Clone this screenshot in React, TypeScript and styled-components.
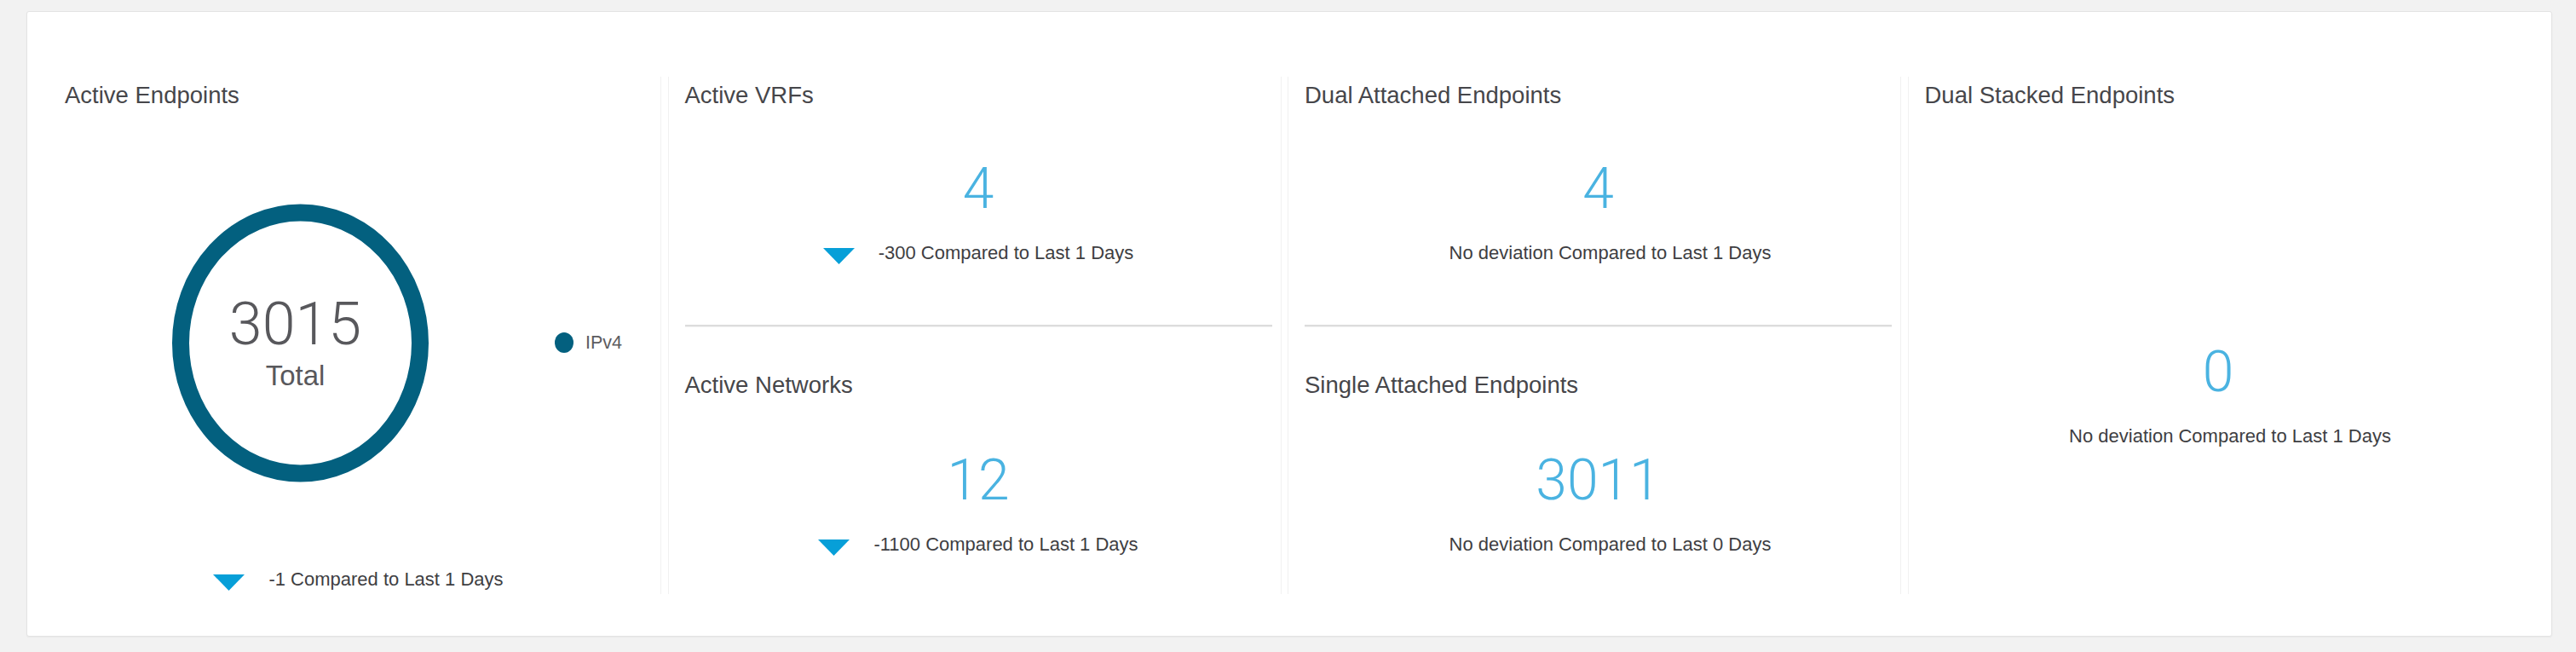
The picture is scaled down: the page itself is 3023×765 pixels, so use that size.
import React from "react";
import styled, { createGlobalStyle } from "styled-components";

const GlobalStyle = createGlobalStyle`
  html, body { margin: 0; padding: 0; background: #f2f2f2; }
  body { font-family: "Liberation Sans", Arial, sans-serif; }
  * { box-sizing: border-box; }
`;

const Page = styled.div`
  padding: 13px 28px 18px 31px;
  background: #f2f2f2;
  min-height: 765px;
`;

const Card = styled.div`
  background: #ffffff;
  border: 1px solid #e3e3e3;
  border-radius: 3px;
  box-shadow: 0 1px 2px rgba(0, 0, 0, 0.04);
  padding: 76px 0 49px 24px;
`;

const Grid = styled.div`
  display: grid;
  grid-template-columns: repeat(4, 720px);
  column-gap: 7.5px;
  height: 607px;
`;

const Column = styled.section`
  display: flex;
  flex-direction: column;
  padding: 0 10px 0 19px;
  border-left: 1px solid #f1f1f1;
  border-right: 1px solid #f1f1f1;
  min-width: 0;

  &:first-child {
    border-left-color: transparent;
  }
  &:last-child {
    border-right-color: transparent;
  }
`;

const Section = styled.div<{ $top: number; $bottom?: number }>`
  display: flex;
  flex-direction: column;
  padding-top: ${(p) => p.$top}px;
  padding-bottom: ${(p) => p.$bottom ?? 0}px;
`;

const Title = styled.h3`
  margin: 0;
  font-size: 27.5px;
  line-height: 32px;
  font-weight: 400;
  color: #46464a;
  white-space: nowrap;
`;

const Value = styled.div<{ $gap: number }>`
  margin-top: ${(p) => p.$gap}px;
  font-family: Roboto, "Liberation Sans", sans-serif;
  font-weight: 300;
  font-size: 66px;
  line-height: 66px;
  color: #4ab3e1;
  text-align: center;
`;

const Delta = styled.div<{ $gap: number }>`
  margin-top: ${(p) => p.$gap}px;
  display: flex;
  justify-content: center;
  align-items: flex-start;
  gap: 28px;
  font-size: 22px;
  line-height: 26px;
  color: #3e3e42;
  white-space: nowrap;
`;

const DownIcon = styled.svg`
  flex: none;
  margin-top: 7px;
  display: block;
`;

const IconSlot = styled.span`
  width: 0;
  flex: none;
`;

const Divider = styled.div`
  height: 2px;
  background: #dcdcdc;
  box-shadow: 0 1px 0 #f1f1f1;
`;

const ChartRow = styled.div`
  margin-top: 110.6px;
  margin-left: 126px;
  display: flex;
  align-items: center;
`;

const RingBox = styled.div`
  position: relative;
  width: 301px;
  height: 327px;
  flex: none;
`;

const RingLabel = styled.div`
  position: absolute;
  inset: 0;
  display: flex;
  flex-direction: column;
  align-items: center;
  padding: 106px 12px 0 0;
`;

const TotalNumber = styled.div`
  font-family: Roboto, "Liberation Sans", sans-serif;
  font-weight: 300;
  font-size: 70px;
  line-height: 70px;
  color: #58585c;
`;

const TotalCaption = styled.div`
  margin-top: 8.5px;
  font-size: 33px;
  line-height: 36px;
  color: #58585c;
`;

const Legend = styled.div`
  margin-left: 148px;
  display: flex;
  align-items: center;
  gap: 14px;
  font-size: 21.5px;
  line-height: 24px;
  color: #5c5c60;
`;

const LegendDot = styled.span`
  width: 22px;
  height: 24px;
  border-radius: 50%;
  background: #03607f;
  flex: none;
`;

const DownTriangle = () => (
  <DownIcon width="37" height="19" viewBox="0 0 37 19">
    <polygon points="0,0 37,0 18.5,19" fill="#079fd8" />
  </DownIcon>
);

type DeltaProps = { text: string; down?: boolean; gap: number };

const DeltaLine = ({ text, down, gap }: DeltaProps) => (
  <Delta $gap={gap}>
    {down ? <DownTriangle /> : <IconSlot />}
    <span>{text}</span>
  </Delta>
);

export default function App() {
  return (
    <>
      <GlobalStyle />
      <Page>
        <Card>
          <Grid>
            <Column>
              <Section $top={6.4}>
                <Title>Active Endpoints</Title>
              </Section>
              <ChartRow>
                <RingBox>
                  <svg width="301" height="327" viewBox="0 0 301 327">
                    <ellipse
                      cx="150.5"
                      cy="163.5"
                      rx="140.5"
                      ry="153"
                      fill="none"
                      stroke="#03607f"
                      strokeWidth="20"
                    />
                  </svg>
                  <RingLabel>
                    <TotalNumber>3015</TotalNumber>
                    <TotalCaption>Total</TotalCaption>
                  </RingLabel>
                </RingBox>
                <Legend>
                  <LegendDot />
                  <span>IPv4</span>
                </Legend>
              </ChartRow>
              <DeltaLine down gap={101.4} text="-1 Compared to Last 1 Days" />
            </Column>

            <Column>
              <Section $top={6.4} $bottom={70.6}>
                <Title>Active VRFs</Title>
                <Value $gap={61}>4</Value>
                <DeltaLine down gap={29} text="-300 Compared to Last 1 Days" />
              </Section>
              <Divider />
              <Section $top={53.4}>
                <Title>Active Networks</Title>
                <Value $gap={63}>12</Value>
                <DeltaLine down gap={29} text="-1100 Compared to Last 1 Days" />
              </Section>
            </Column>

            <Column>
              <Section $top={6.4} $bottom={70.6}>
                <Title>Dual Attached Endpoints</Title>
                <Value $gap={61}>4</Value>
                <DeltaLine gap={29} text="No deviation Compared to Last 1 Days" />
              </Section>
              <Divider />
              <Section $top={53.4}>
                <Title>Single Attached Endpoints</Title>
                <Value $gap={63}>3011</Value>
                <DeltaLine gap={29} text="No deviation Compared to Last 0 Days" />
              </Section>
            </Column>

            <Column>
              <Section $top={6.4}>
                <Title>Dual Stacked Endpoints</Title>
                <Value $gap={276}>0</Value>
                <DeltaLine gap={29} text="No deviation Compared to Last 1 Days" />
              </Section>
            </Column>
          </Grid>
        </Card>
      </Page>
    </>
  );
}
